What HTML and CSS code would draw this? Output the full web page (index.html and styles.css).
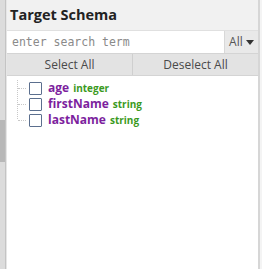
FILE: index.html
```html
<!DOCTYPE html>
<html lang="en">
<head>
    <meta charset="UTF-8">
    <title>Target Schema</title>
    <link rel="stylesheet" href="styles.css">
</head>
<body>
<div class="split">
    <div class="gutter"><span class="grip"></span></div>
    <div class="panel">
        <div class="panel-head">Target Schema</div>
        <div class="search">
            <input type="text" placeholder="enter search term">
            <span class="filter">All <span class="caret"></span></span>
        </div>
        <div class="actions">
            <button>Select All</button>
            <button>Deselect All</button>
        </div>
        <ul class="tree">
            <li><span class="box"></span><b>age</b><i>integer</i></li>
            <li><span class="box"></span><b>firstName</b><i>string</i></li>
            <li><span class="box"></span><b>lastName</b><i>string</i></li>
        </ul>
    </div>
</div>
</body>
</html>
```
FILE: styles.css
```css
html, body {
    margin: 0;
    height: 100%;
    background: #f4f4f4;
    font-family: "Open Sans", "Noto Sans", sans-serif;
}

.split {
    display: flex;
    height: 100%;
}

.gutter {
    width: 5px;
    background: #dcdcdc;
    border-right: 1px solid #c4c4c4;
    position: relative;
}
.grip {
    position: absolute;
    left: 0;
    top: 120px;
    width: 5px;
    height: 42px;
    background: #b8b8b8;
}

.panel {
    flex: 1;
    display: flex;
    flex-direction: column;
    background: #fff;
    border-left: 1px solid #e6e6e6;
    border-right: 2px solid #d6d6d6;
    margin-right: 2px;
}

.panel-head {
    height: 30px;
    line-height: 30px;
    padding-left: 3px;
    background: #f1f1f1;
    font-weight: bold;
    font-size: 14.5px;
    color: #222;
    border-bottom: 1px solid #e0e0e0;
}

.search {
    display: flex;
    height: 22px;
    border-bottom: 1px solid #d4d4d4;
}
.search input {
    flex: 1;
    min-width: 0;
    border: none;
    padding: 0 5px;
    font-family: "DejaVu Sans Mono", monospace;
    font-size: 11.5px;
    background: #fff;
    outline: none;
}
.search input::placeholder {
    color: #8a8a8a;
}
.filter {
    width: 33px;
    background: #e9e9e9;
    border-left: 1px solid #d8d8d8;
    font-size: 12px;
    color: #555;
    line-height: 22px;
    text-align: center;
}
.caret {
    display: inline-block;
    border-left: 4px solid transparent;
    border-right: 4px solid transparent;
    border-top: 5px solid #333;
    vertical-align: middle;
}

.actions {
    display: flex;
    height: 21px;
    border-bottom: 1px solid #d4d4d4;
}
.actions button {
    flex: 1;
    border: none;
    background: #e3e3e3;
    font-family: "Open Sans", sans-serif;
    font-size: 12px;
    color: #4a4a4a;
    padding: 0;
}
.actions button + button {
    border-left: 1px solid #cfcfcf;
}

.tree {
    list-style: none;
    margin: 4px 0 0 10px;
    padding: 0;
    border-left: 1px dotted #c8c8c8;
    height: 39px;
}
.tree li {
    display: flex;
    align-items: center;
    height: 16px;
    line-height: 16px;
    white-space: nowrap;
}
.tree li::before {
    content: "";
    width: 8px;
    border-top: 1px dotted #c8c8c8;
    margin-right: 3px;
}
.box {
    width: 11px;
    height: 11px;
    border: 1px solid #5b6f8e;
    border-radius: 1px;
    margin-right: 6px;
}
.tree b {
    font-size: 12px;
    color: #7d1f9e;
    margin-right: 4px;
}
.tree i {
    font-style: normal;
    font-weight: bold;
    font-size: 10px;
    color: #3b9a1e;
}
```
